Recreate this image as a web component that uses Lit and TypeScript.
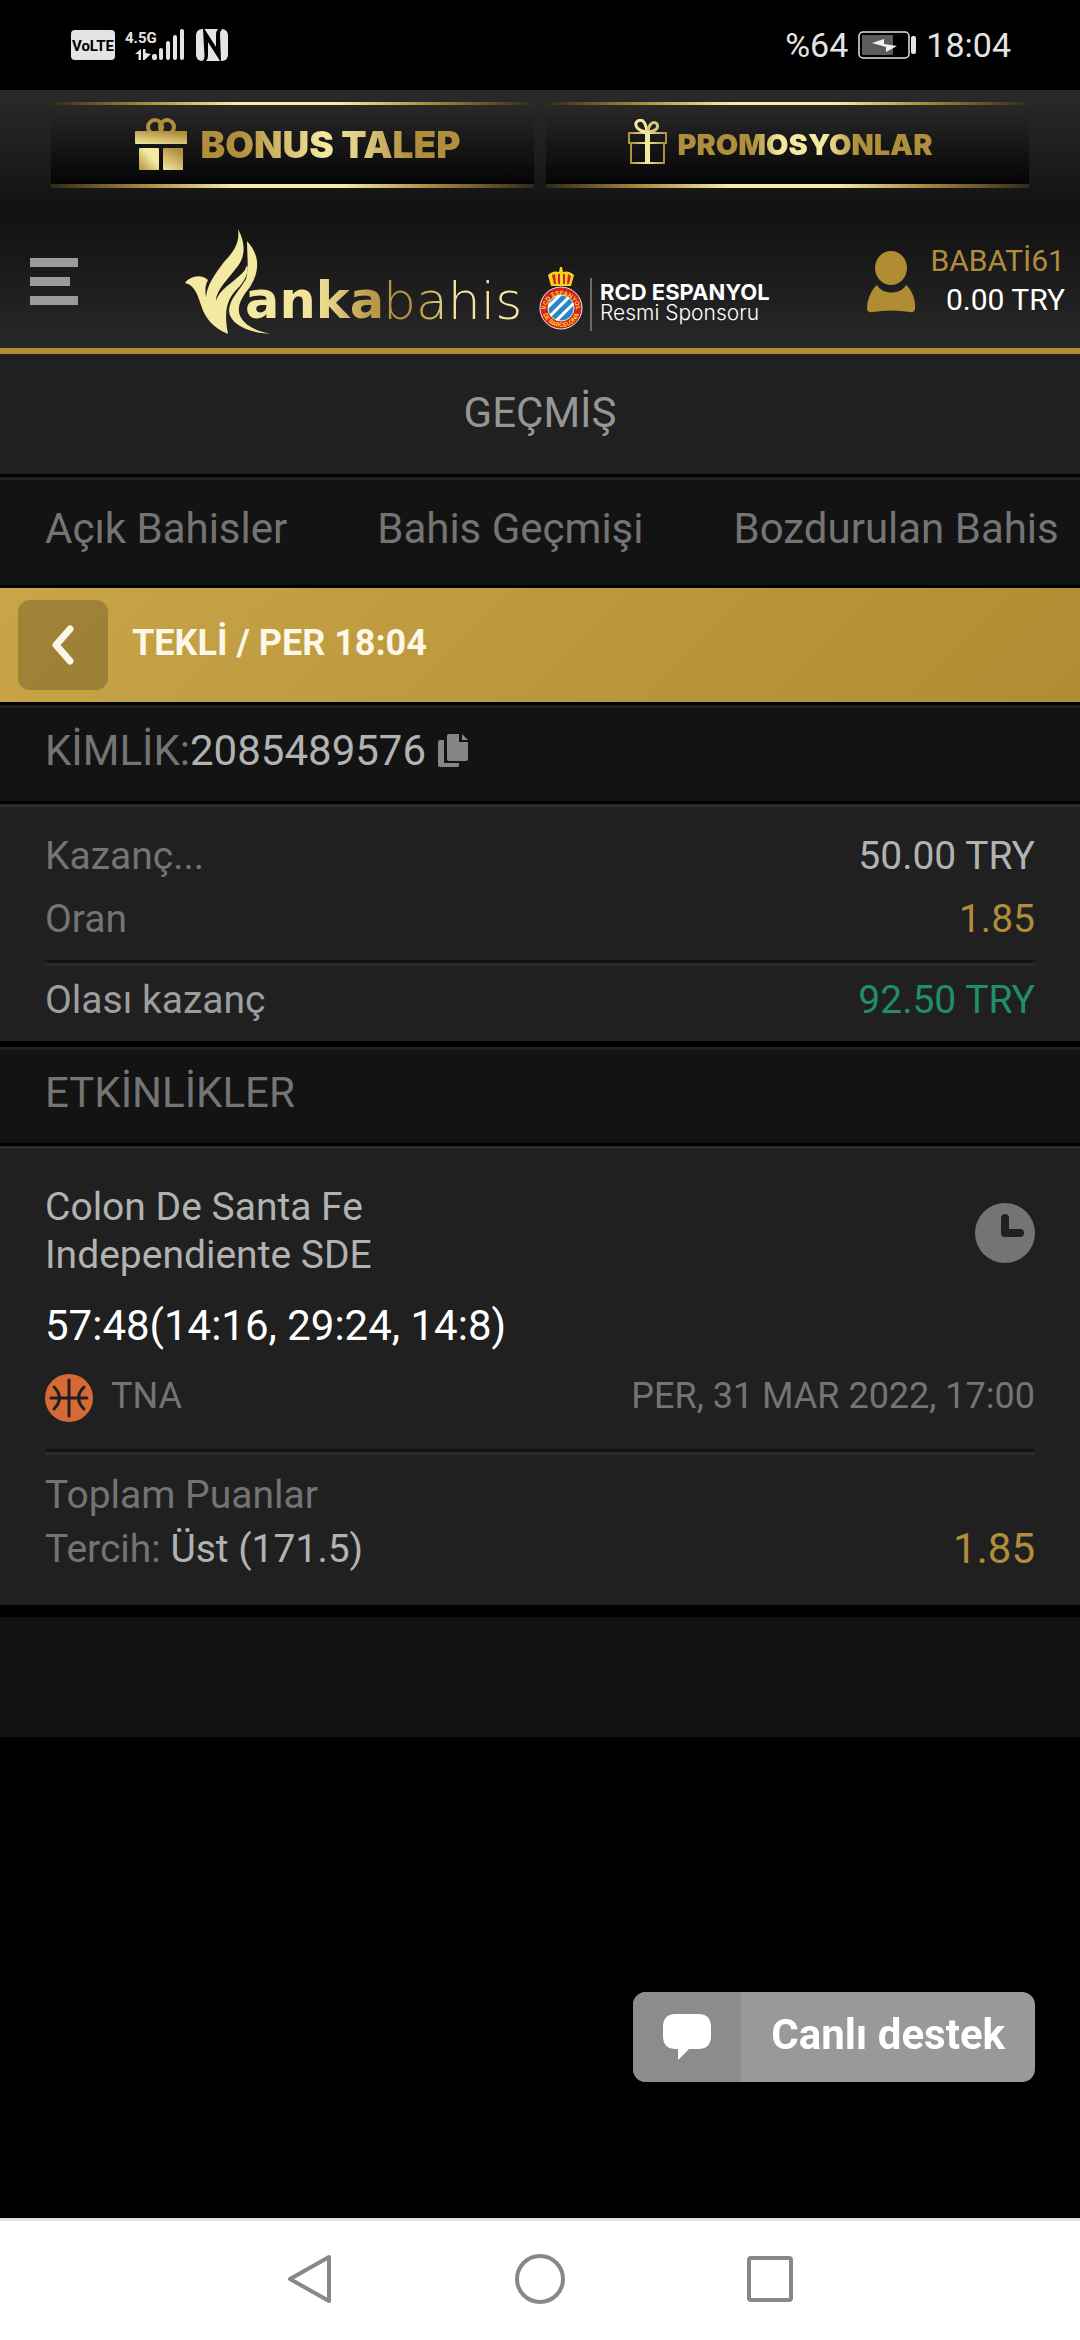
import { LitElement, html, css, svg } from "lit";
import { customElement } from "lit/decorators.js";

const goldStops = svg`
  <stop offset="0" stop-color="#b08f3c" />
  <stop offset="0.5" stop-color="#f4e9a0" />
  <stop offset="1" stop-color="#b08f3c" />
`;

@customElement("status-bar")
export class StatusBar extends LitElement {
  static styles = css`
    :host {
      display: block;
      background: #000;
      color: #e4e4e4;
      font-family: Roboto, sans-serif;
    }
    .bar {
      display: flex;
      justify-content: space-between;
      align-items: center;
      height: 90px;
      padding: 0 69px 0 71px;
      box-sizing: border-box;
    }
    .group {
      display: flex;
      align-items: center;
      gap: 10px;
      font-size: 34px;
      line-height: 40px;
    }
    svg {
      display: block;
      overflow: visible;
    }
    .small {
      font-family: "Liberation Sans Narrow", Roboto, sans-serif;
      font-weight: 700;
    }
  `;

  render() {
    return html`
      <div class="bar">
        <div class="group">
          <svg width="44" height="32" viewBox="0 0 44 32" role="img" aria-label="VoLTE">
            <rect x="0" y="1" width="44" height="30" rx="4" fill="#e4e4e4" />
            <text class="small" x="22" y="22" font-size="15" text-anchor="middle" fill="#000">VoLTE</text>
          </svg>
          <svg width="61" height="32" viewBox="0 0 61 32" fill="#e4e4e4">
            <text class="small" x="0" y="14" font-size="15">4.5G</text>
            <path d="M10 25L16 20V31H13.500V25Z" />
            <path d="M18 20H20.500V24L26 25L19.500 31H18Z" />
            <rect x="27" y="25" width="5" height="6" rx="2" />
            <rect x="34" y="19" width="4" height="12" rx="2" />
            <rect x="41" y="12" width="4" height="19" rx="2" />
            <rect x="48" y="6" width="4" height="25" rx="2" />
            <rect x="55" y="0" width="4" height="31" rx="2" />
          </svg>
          <svg width="32" height="32" viewBox="0 0 32 32">
            <rect x="0" y="0" width="32" height="32" rx="6" fill="#e4e4e4" />
            <path d="M7 0L8.500 27Q8.500 31 6 32H10Q12 30 12 27V13L24 32H25L24 6Q24 2 26 0H22Q20 2 20 6L20 18L8.500 0Z" fill="#000" />
          </svg>
        </div>
        <div class="group">
          <span>%64</span>
          <svg width="58" height="28" viewBox="0 0 58 28">
            <rect x="1" y="1" width="50" height="26" rx="4" fill="none" stroke="#e4e4e4" stroke-width="1.500" />
            <rect x="4" y="4" width="31" height="20" rx="1" fill="#5c5c5c" />
            <rect x="53" y="5" width="5" height="18" rx="2" fill="#e4e4e4" />
            <path d="M14 12L26 8V13L39 15L28 21V16Z" fill="#f0f0f0" />
          </svg>
          <time>18:04</time>
        </div>
      </div>
    `;
  }
}

@customElement("site-header")
export class SiteHeader extends LitElement {
  static styles = css`
    :host {
      display: block;
      font-family: Roboto, sans-serif;
    }
    .header {
      padding-top: 12px;
      background: linear-gradient(#2a2a2a, #111 48%, #282828);
      border-bottom: 6px solid #b08c32;
    }
    .promos {
      display: grid;
      grid-template-columns: 1fr 1fr;
      gap: 12px;
      padding: 0 51px;
    }
    .promo {
      display: flex;
      flex-direction: column;
      text-decoration: none;
      background: linear-gradient(#2a2a2a, #030303);
    }
    .promo::before,
    .promo::after {
      content: "";
      height: 3px;
      background: linear-gradient(90deg, #302a1c, #a08238 18%, #f6eca4 38%, #f6eca4 60%, #a08238 80%, #302a1c);
    }
    .promo::after {
      height: 4px;
    }
    .face {
      display: flex;
      align-items: center;
      justify-content: center;
      height: 79px;
    }
    .bonus {
      gap: 14px;
      padding-left: 10px;
    }
    .promotions {
      gap: 10px;
      padding-right: 14px;
    }
    .word {
      font-family: Inter, sans-serif;
      font-weight: 900;
      color: transparent;
      -webkit-background-clip: text;
      background-clip: text;
      white-space: nowrap;
    }
    .bonus .word {
      font-size: 37px;
      background-image: linear-gradient(90deg, #b08f3c 15%, #f4e9a0 48%, #d8c47a 65%, #b08f3c 80%);
    }
    .promotions .word {
      font-size: 29px;
      background-image: linear-gradient(90deg, #b08f3c 30%, #f4e9a0 40%, #f4e9a0 58%, #b08f3c 70%);
    }
    .main {
      display: flex;
      align-items: center;
      justify-content: space-between;
      height: 133px;
      margin-top: 27px;
      padding: 0 15px 0 30px;
    }
    svg {
      display: block;
    }
    .menu {
      width: 58px;
      padding: 0;
      border: 0;
      background: none;
    }
    .brand {
      display: flex;
      align-items: center;
      text-decoration: none;
    }
    .anka {
      font-family: "DejaVu Sans", sans-serif;
      font-size: 51px;
      font-weight: 700;
    }
    .bahis {
      font-family: "DejaVu Sans", sans-serif;
      font-size: 52px;
      font-weight: 200;
    }
    .club {
      font-family: Inter, sans-serif;
      font-size: 22px;
      font-weight: 700;
    }
    .sponsor {
      font-family: Inter, sans-serif;
      font-size: 21px;
      font-weight: 300;
    }
    .ring {
      font-family: Inter, sans-serif;
      font-size: 6px;
      font-weight: 700;
    }
    .user {
      display: flex;
      align-items: center;
      gap: 15px;
      text-decoration: none;
      font-size: 30px;
      line-height: 39px;
      text-align: right;
      color: #fff;
    }
    .user span {
      display: block;
    }
    .account {
      padding-bottom: 4px;
    }
    .name {
      color: #b08c3c;
    }
  `;

  render() {
    return html`
      <header class="header">
        <nav class="promos">
          <a class="promo" href="#bonus">
            <span class="face bonus">
              <svg width="52" height="53" viewBox="0 0 52 53">
                <defs>
                  <linearGradient id="lid" x1="0" y1="1" x2="0.500" y2="0"><stop offset="0" stop-color="#f4e9a0" /><stop offset="1" stop-color="#b08f3c" /></linearGradient>
                  <linearGradient id="box" x1="0" y1="1" x2="1" y2="0"><stop offset="0" stop-color="#b08f3c" /><stop offset="0.600" stop-color="#f4e9a0" /></linearGradient>
                </defs>
                <circle cx="20" cy="9" r="7" fill="none" stroke="#b08f3c" stroke-width="4" />
                <circle cx="32" cy="9" r="7" fill="none" stroke="#b08f3c" stroke-width="4" />
                <rect x="0" y="13" width="52" height="13" rx="1" fill="url(#lid)" />
                <rect x="4" y="30" width="20" height="22" rx="1" fill="url(#box)" />
                <rect x="28" y="30" width="20" height="22" rx="1" fill="url(#lid)" />
              </svg>
              <span class="word">BONUS TALEP</span>
            </span>
          </a>
          <a class="promo" href="#promosyonlar">
            <span class="face promotions">
              <svg width="39" height="52" viewBox="0 0 39 52">
                <defs><linearGradient id="outline">${goldStops}</linearGradient></defs>
                <g fill="none" stroke="url(#outline)" stroke-width="2">
                  <rect x="1" y="14" width="37" height="10" />
                  <rect x="3" y="24" width="33" height="20" />
                  <path d="M18 13C10 12 7 7 8 4Q10 0 15 2Q18 5 19 13" stroke="#f4e9a0" stroke-width="3" />
                  <path d="M20 13C28 12 31 9 29 5Q26 2 23 5Q20 8 20 13" stroke="#d8c47a" stroke-width="3" />
                </g>
                <rect x="17" y="12" width="5" height="32" fill="#f4e9a0" />
              </svg>
              <span class="word">PROMOSYONLAR</span>
            </span>
          </a>
        </nav>
        <div class="main">
          <button class="menu" aria-label="Menü">
            <svg width="48" height="48" viewBox="0 0 48 48" fill="#9b9b9b">
              <rect y="0" width="48" height="9" />
              <rect y="19" width="40" height="9" />
              <rect y="38" width="48" height="9" />
            </svg>
          </button>
          <a class="brand" href="#home">
            <svg width="585" height="108" viewBox="0 0 585 108">
              <defs>
                <linearGradient id="anka" gradientUnits="userSpaceOnUse" x1="62" x2="340" y1="0" y2="0">
                  <stop offset="0" stop-color="#f4e9a0" />
                  <stop offset="0.250" stop-color="#f0e49a" />
                  <stop offset="0.450" stop-color="#b8984a" />
                  <stop offset="0.600" stop-color="#b08f3c" />
                  <stop offset="0.740" stop-color="#f0e49a" />
                  <stop offset="1" stop-color="#f4e9a0" />
                </linearGradient>
                <clipPath id="shield"><circle cx="376" cy="80" r="13" /></clipPath>
                <path id="arcTop" d="M361 82A15 15 0 0 1 391 82" />
                <path id="arcBottom" d="M357 80A19 19 0 0 0 395 80" />
              </defs>
              <g fill="#f4e9a0">
                <path d="M0 55C4 49 15 45 23 52C20 57 20 64 21 69C22 57 30 46 39 34C49 23 55 15 53 1C61 16 60 28 53 38C43 51 31 62 31 73C35 60 50 54 60 42C63 30 66 47 54 59C43 70 38 80 43 106C28 100 20 90 16 77C12 65 9 57 0 55Z" />
                <path d="M62 13C75 27 75 43 65 59C57 69 53 76 54 84C56 96 70 103 86 106C63 105 45 96 44 83C44 71 55 62 61 51C64 40 62 27 62 13Z" />
              </g>
              <text class="anka" x="60" y="90" fill="url(#anka)">anka</text>
              <text class="bahis" x="198" y="91" fill="url(#anka)">bahis</text>
              <g>
                <path d="M366 58L363 47Q368 42 374 44L375 39H377L378 44Q384 42 389 47L386 58Z" fill="#f7d417" />
                <path d="M367 47L369 56H371L370 46ZM373 46V56H375V46ZM378 46V56H380L380 46ZM383 46L382 56H384L386 48Z" fill="#d3202a" />
                <circle cx="376" cy="80" r="21" fill="#d3202a" stroke="#f0e6e0" stroke-width="1" />
                <circle cx="376" cy="80" r="13" fill="#2a86c4" stroke="#f0e6e0" stroke-width="1" />
                <path clip-path="url(#shield)" d="M358 84L382 60M362 91L388 65M368 96L394 70" fill="none" stroke="#fff" stroke-width="3" />
                <text class="ring" fill="#f7d417"><textPath href="#arcTop" startOffset="50%" text-anchor="middle">RCD ESPANYOL</textPath></text>
                <text class="ring" fill="#f7d417"><textPath href="#arcBottom" startOffset="50%" text-anchor="middle">DE BARCELONA</textPath></text>
              </g>
              <rect x="405" y="50" width="2" height="53" fill="#6b6b6b" />
              <text fill="#fff"><tspan class="club" x="415" y="72">RCD ESPANYOL</tspan><tspan class="sponsor" x="415" y="92">Resmi Sponsoru</tspan></text>
            </svg>
          </a>
          <a class="user" href="#hesap">
            <svg width="49" height="62" viewBox="0 0 49 62" fill="#b08c32">
              <ellipse cx="24" cy="17" rx="16" ry="17" />
              <path d="M10 34C15 44 34 44 39 34C45 39 49 49 48 58Q47 62 43 61Q24 58 6 61Q1 62 0 58C0 49 4 39 10 34Z" />
            </svg>
            <span class="account">
              <span class="name">BABATİ61</span>
              <span>0.00 TRY</span>
            </span>
          </a>
        </div>
      </header>
    `;
  }
}

@customElement("bet-history")
export class BetHistory extends LitElement {
  static styles = css`
    :host {
      display: block;
      font-family: Roboto, sans-serif;
      font-size: 39px;
      color: #747474;
    }
    h1,
    h2,
    p,
    dl,
    dd {
      margin: 0;
      font-weight: 400;
    }
    svg {
      display: block;
    }
    button {
      padding: 0;
      border: 0;
      background: none;
      font: inherit;
      color: inherit;
    }
    .title {
      display: flex;
      align-items: center;
      justify-content: center;
      box-sizing: border-box;
      height: 120px;
      padding-bottom: 4px;
      background: #202020;
      color: #969696;
      font-size: 42px;
    }
    .band {
      display: flex;
      align-items: center;
      box-sizing: border-box;
      height: 99px;
      padding: 0 45px 8px;
      background: #131313;
      border-top: 3px solid #202020;
      border-bottom: 3px solid #000;
      font-size: 42px;
    }
    .tabs {
      height: 111px;
      margin-top: 3px;
      gap: 90px;
      overflow: hidden;
      white-space: nowrap;
    }
    .tabs a {
      color: inherit;
      text-decoration: none;
    }
    .slip {
      display: flex;
      align-items: center;
      gap: 24px;
      height: 114px;
      padding: 0 18px;
      background: linear-gradient(135deg, #c9a548, #b08c32);
      border-bottom: 3px solid #000;
      color: #fdf7e8;
    }
    .slip h2 {
      padding-bottom: 4px;
      font-size: 36px;
      font-weight: 700;
    }
    .back {
      display: grid;
      place-items: center;
      width: 90px;
      height: 90px;
      border-radius: 12px;
      background: rgba(0, 0, 0, 0.2);
    }
    .band .copy {
      margin-left: 12px;
    }
    .bright {
      color: #b2b2b2;
    }
    .soft {
      color: #9e9e9e;
    }
    .gold {
      color: #b08c3c;
    }
    .green {
      color: #218e68;
    }
    .card {
      background: #202020;
      border-top: 3px solid #2c2c2c;
      padding: 0 45px;
    }
    .amounts {
      padding-top: 17px;
      padding-bottom: 10px;
      border-bottom: 6px solid #000;
    }
    .row {
      display: flex;
      align-items: center;
      justify-content: space-between;
    }
    .amounts .row {
      height: 63px;
    }
    .rule {
      height: 3px;
      border-top: 3px solid #131313;
      background: #2c2c2c;
    }
    .amounts .rule {
      margin: 10px 0 2px;
    }
    .event {
      padding-top: 34px;
      padding-bottom: 29px;
      border-bottom: 12px solid #000;
    }
    .teams {
      line-height: 48px;
    }
    .names {
      padding-bottom: 4px;
    }
    .score {
      margin: 16px 0 21px;
      font-size: 42px;
      line-height: 54px;
      color: #fff;
    }
    .row.meta {
      align-items: flex-start;
      font-size: 36px;
      line-height: 45px;
    }
    .league {
      display: flex;
      gap: 18px;
    }
    .event .rule {
      margin: 27px 0 13px;
    }
    .pick {
      line-height: 54px;
    }
    .odd {
      font-size: 42px;
    }
    .end {
      height: 120px;
      background: #131313;
    }
  `;

  private tabs = ["Açık Bahisler", "Bahis Geçmişi", "Bozdurulan Bahis"];

  render() {
    return html`
      <main>
        <h1 class="title">GEÇMİŞ</h1>
        <nav class="band tabs">${this.tabs.map((tab) => html`<a href="#tab">${tab}</a>`)}</nav>
        <div class="slip">
          <button class="back" aria-label="Geri">
            <svg width="24" height="40" viewBox="0 0 24 40"><path d="M19 4L5 20L19 36" fill="none" stroke="#fbf6ea" stroke-width="7" stroke-linecap="round" stroke-linejoin="round" /></svg>
          </button>
          <h2>TEKLİ / PER 18:04</h2>
        </div>
        <div class="band">
          <span>KİMLİK:</span><span class="bright">2085489576</span>
          <button class="copy" aria-label="Kopyala">
            <svg width="30" height="34" viewBox="0 0 30 34" fill="#868686">
              <path d="M9 2Q9 0 11 0H21V8H30V25Q30 27 28 27H11Q9 27 9 25Z" />
              <path d="M24 0L30 6H24Z" />
              <path d="M2 6H6V29H21V32Q21 33 19 33H2Q0 33 0 31V8Q0 6 2 6Z" />
            </svg>
          </button>
        </div>
        <dl class="card amounts">
          <div class="row"><dt>Kazanç...</dt><dd class="bright">50.00 TRY</dd></div>
          <div class="row"><dt>Oran</dt><dd class="gold">1.85</dd></div>
          <div class="rule"></div>
          <div class="row"><dt class="soft">Olası kazanç</dt><dd class="green">92.50 TRY</dd></div>
        </dl>
        <h2 class="band">ETKİNLİKLER</h2>
        <section class="card event">
          <div class="row teams bright">
            <div class="names">
              <p>Colon De Santa Fe</p>
              <p>Independiente SDE</p>
            </div>
            <svg width="60" height="60" viewBox="0 0 60 60">
              <circle cx="30" cy="30" r="30" fill="#747474" />
              <path d="M30 15V30H45" fill="none" stroke="#202020" stroke-width="8" stroke-linecap="round" stroke-linejoin="round" />
            </svg>
          </div>
          <p class="score">57:48(14:16, 29:24, 14:8)</p>
          <div class="row meta">
            <span class="league">
              <svg width="48" height="48" viewBox="0 0 48 48">
                <circle cx="24" cy="24" r="24" fill="#d66a35" />
                <path d="M24 6V42M6 24H42M9 13Q20 24 9 35M39 13Q28 24 39 35" fill="none" stroke="#202020" stroke-width="3" stroke-linecap="round" />
              </svg>
              TNA
            </span>
            <time>PER, 31 MAR 2022, 17:00</time>
          </div>
          <div class="rule"></div>
          <p class="pick">Toplam Puanlar</p>
          <div class="row pick">
            <span>Tercih: <span class="bright">Üst (171.5)</span></span>
            <span class="odd gold">1.85</span>
          </div>
        </section>
        <div class="end"></div>
      </main>
    `;
  }
}

@customElement("app-root")
export class AppRoot extends LitElement {
  static styles = css`
    :host {
      display: flex;
      flex-direction: column;
      min-height: 100vh;
      background: #000;
      font-family: Roboto, sans-serif;
    }
    bet-history {
      flex: 1;
    }
    .support {
      position: fixed;
      right: 45px;
      bottom: 258px;
      display: flex;
      height: 90px;
      padding: 0;
      border: 0;
      border-radius: 13px;
      overflow: hidden;
      background: #999;
      color: #fff;
      font: 700 42px Roboto, sans-serif;
    }
    .bubble {
      display: grid;
      place-items: center;
      width: 108px;
      height: 90px;
      background: #8c8c8c;
    }
    .label {
      padding: 0 30px;
      line-height: 86px;
    }
    .keys {
      display: flex;
      justify-content: center;
      box-sizing: border-box;
      height: 122px;
      padding-bottom: 3px;
      border-top: 3px solid #e0e0df;
      background: #fff;
    }
    .key {
      display: grid;
      place-items: center;
      width: 230px;
      padding: 0;
      border: 0;
      background: none;
    }
    svg {
      display: block;
    }
  `;

  render() {
    return html`
      <status-bar></status-bar>
      <site-header></site-header>
      <bet-history></bet-history>
      <button class="support">
        <span class="bubble">
          <svg width="48" height="48" viewBox="0 0 48 48"><path d="M13 1H35Q48 1 48 14V23Q48 36 35 36H26L15 47V36H13Q0 36 0 23V14Q0 1 13 1Z" fill="#fff" /></svg>
        </span>
        <span class="label">Canlı destek</span>
      </button>
      <nav class="keys">
        <button class="key" aria-label="Geri">
          <svg width="52" height="52" viewBox="0 0 52 52"><path d="M45 4V48L6 26Z" fill="none" stroke="#888" stroke-width="4" stroke-linejoin="round" /></svg>
        </button>
        <button class="key" aria-label="Ana ekran">
          <svg width="52" height="52" viewBox="0 0 52 52"><circle cx="26" cy="26" r="23" fill="none" stroke="#888" stroke-width="4" /></svg>
        </button>
        <button class="key" aria-label="Son uygulamalar">
          <svg width="52" height="52" viewBox="0 0 52 52"><rect x="5" y="5" width="42" height="42" rx="2" fill="none" stroke="#888" stroke-width="4" /></svg>
        </button>
      </nav>
    `;
  }
}
